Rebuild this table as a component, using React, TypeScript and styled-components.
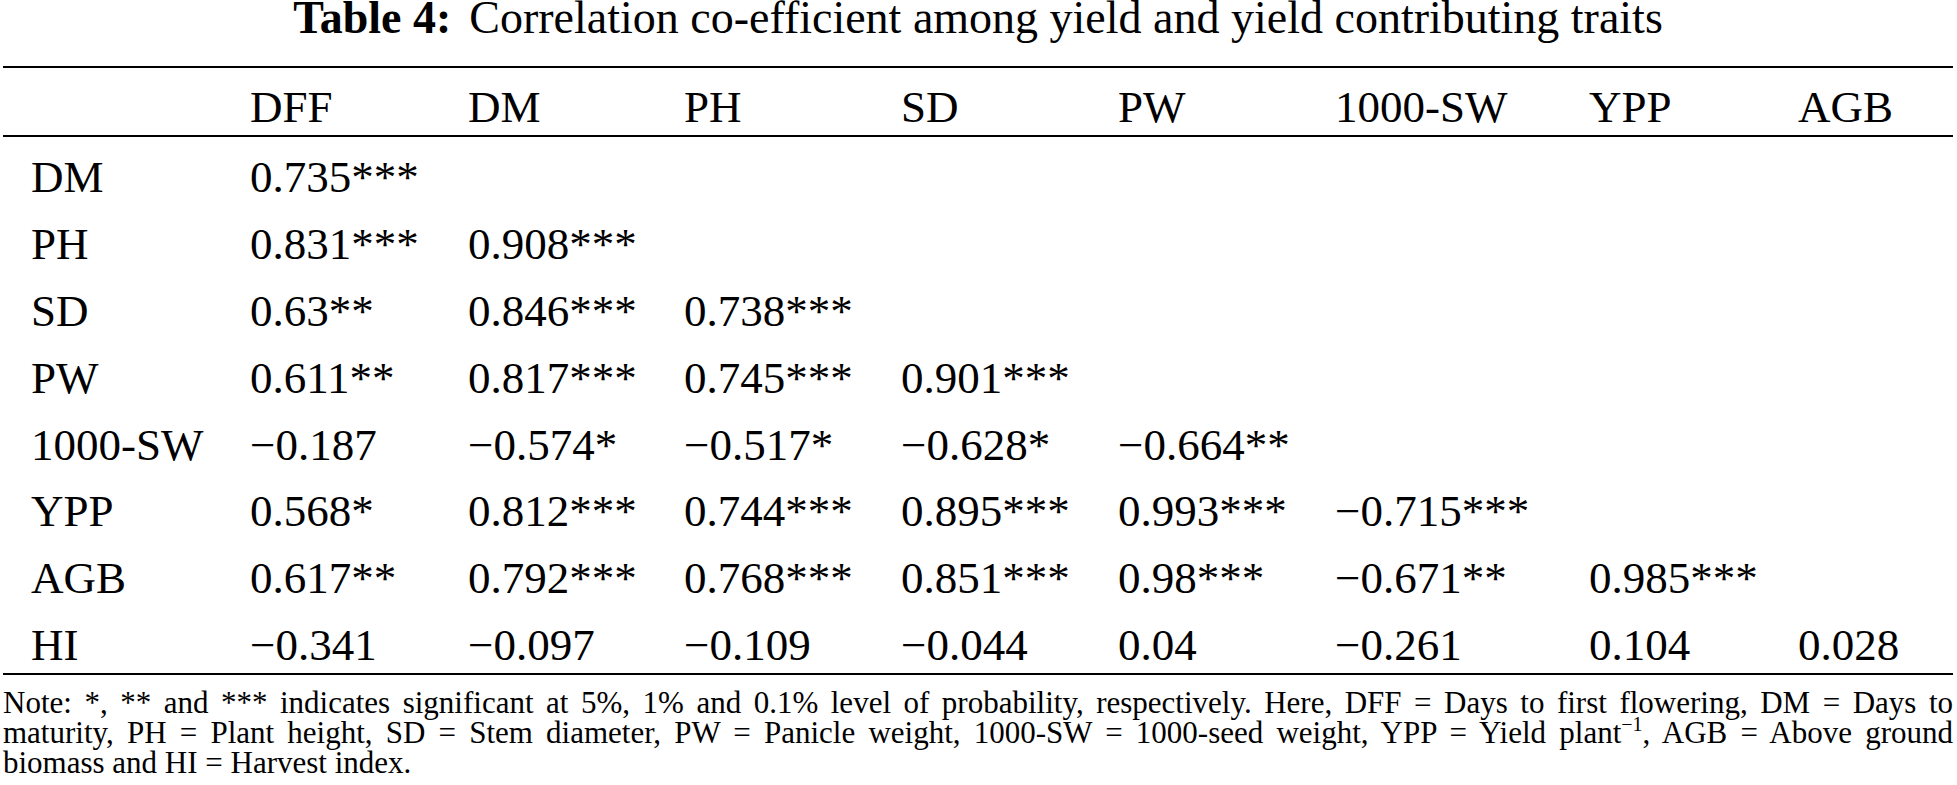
import styled, { createGlobalStyle } from "styled-components";

const GlobalStyle = createGlobalStyle`
  html, body {
    margin: 0;
    padding: 0;
    background: #ffffff;
  }
  body {
    font-family: "Liberation Serif", "Times New Roman", serif;
    color: #000000;
  }
`;

const Page = styled.div`
  width: 1957px;
  height: 785px;
  box-sizing: border-box;
  padding: 0 4px 0 3px;
  overflow: hidden;
`;

const Caption = styled.div`
  font-size: 46px;
  line-height: 36px;
  text-align: center;
  white-space: nowrap;
`;

const CaptionLabel = styled.span`
  font-weight: bold;
  margin-right: 18px;
`;

const Table = styled.div`
  margin-top: 30px;
  border-top: 2px solid #000;
  border-bottom: 2px solid #000;
  font-size: 45px;
`;

// label + 8 trait columns, widths follow the typeset table
const COLUMNS = "219px 218px 216px 217px 217px 217px 254px 209px 1fr";

const Row = styled.div`
  display: grid;
  grid-template-columns: ${COLUMNS};
  padding-left: 28px;
  white-space: nowrap;
`;

const HeadRow = styled(Row)`
  padding-top: 12px;
  line-height: 55px;
  border-bottom: 2px solid #000;
`;

const Body = styled.div`
  display: grid;
  row-gap: 16.9px;
  padding: 15px 0 3px;
  line-height: 50px;
`;

const Cell = styled.span``;

const Notes = styled.div`
  margin-top: 13px;
  font-size: 31px;
  line-height: 30px;
`;

const NoteLine = styled.div<{ $justify?: boolean }>`
  text-align: ${({ $justify }) => ($justify ? "justify" : "left")};
  text-align-last: ${({ $justify }) => ($justify ? "justify" : "left")};
`;

const Sup = styled.sup`
  font-size: 20px;
  line-height: 0;
  vertical-align: 12px;
`;

const traits = ["DFF", "DM", "PH", "SD", "PW", "1000-SW", "YPP", "AGB"];

const rows: [string, string[]][] = [
  ["DM", ["0.735***"]],
  ["PH", ["0.831***", "0.908***"]],
  ["SD", ["0.63**", "0.846***", "0.738***"]],
  ["PW", ["0.611**", "0.817***", "0.745***", "0.901***"]],
  ["1000-SW", ["\u22120.187", "\u22120.574*", "\u22120.517*", "\u22120.628*", "\u22120.664**"]],
  ["YPP", ["0.568*", "0.812***", "0.744***", "0.895***", "0.993***", "\u22120.715***"]],
  ["AGB", ["0.617**", "0.792***", "0.768***", "0.851***", "0.98***", "\u22120.671**", "0.985***"]],
  ["HI", ["\u22120.341", "\u22120.097", "\u22120.109", "\u22120.044", "0.04", "\u22120.261", "0.104", "0.028"]],
];

export default function App() {
  return (
    <>
      <GlobalStyle />
      <Page>
        <Caption>
          <CaptionLabel>Table 4:</CaptionLabel>
          Correlation co-efficient among yield and yield contributing traits
        </Caption>

        <Table>
          <HeadRow>
            <Cell />
            {traits.map((t) => (
              <Cell key={t}>{t}</Cell>
            ))}
          </HeadRow>
          <Body>
            {rows.map(([label, values]) => (
              <Row key={label}>
                <Cell>{label}</Cell>
                {values.map((v, i) => (
                  <Cell key={i}>{v}</Cell>
                ))}
              </Row>
            ))}
          </Body>
        </Table>

        <Notes>
          <NoteLine $justify>
            Note: *, ** and *** indicates significant at 5%, 1% and 0.1% level of probability,
            respectively. Here, DFF = Days to first flowering, DM = Days to
          </NoteLine>
          <NoteLine $justify>
            maturity, PH = Plant height, SD = Stem diameter, PW = Panicle weight, 1000-SW =
            1000-seed weight, YPP = Yield plant<Sup>{"\u22121"}</Sup>, AGB = Above ground
          </NoteLine>
          <NoteLine>biomass and HI = Harvest index.</NoteLine>
        </Notes>
      </Page>
    </>
  );
}
